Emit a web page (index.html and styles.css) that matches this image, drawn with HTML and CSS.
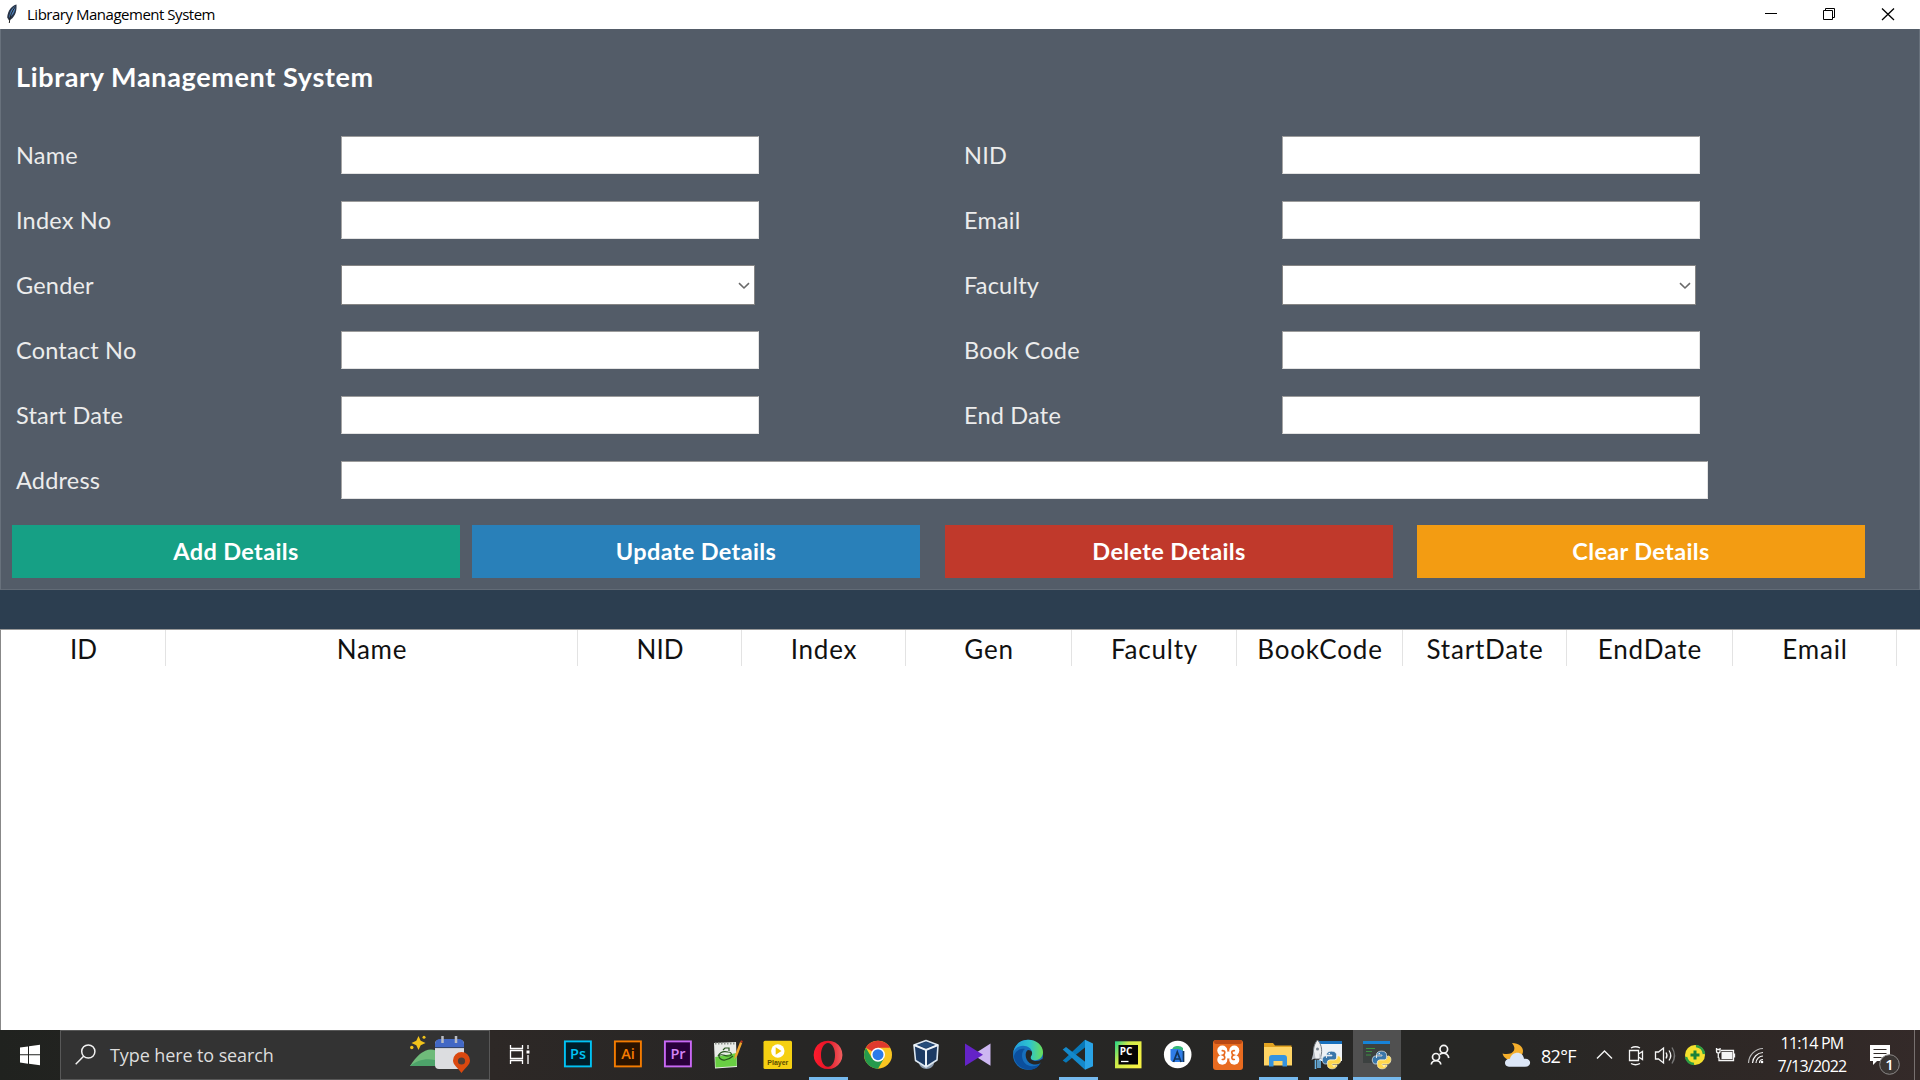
FILE: index.html
```html
<!DOCTYPE html>
<html lang="en">
<head>
<meta charset="utf-8">
<title>Library Management System</title>
<link rel="stylesheet" href="styles.css">
</head>
<body>
<header class="titlebar">
  <svg class="feather" width="12" height="20" viewBox="0 0 12 20"><path d="M10.5.5C6 1.500 1.500 6.500 1.200 13.500L3 16.500C8 14 11 9 10.500.5Z" fill="#263246"/><path d="M9.500 2C6 4 3.500 8 3.200 14 7 11 9.500 7 9.500 2Z" fill="#4f83bd"/><path d="M9.500 2.500C6 7 3.700 12 3.300 19" fill="none" stroke="#202020" stroke-width="1"/></svg>
  <span class="window-title">Library Management System</span>
  <svg class="window-controls" width="180" height="29" viewBox="0 0 180 29" fill="none" stroke="#000" stroke-width="1"><path d="M25 13.500h12M83.500 10.500h9v9h-9zM85.500 10.500v-2h9v9h-2"/><path d="M142 8.500l12 11.500M154 8.500l-12 11.500" stroke-width="1.300"/></svg>
</header>
<main>
  <section class="panel">
    <h1>Library Management System</h1>
    <form class="fields">
      <label>Name</label><input class="entry"><label>NID</label><input class="entry">
      <label>Index No</label><input class="entry"><label>Email</label><input class="entry">
      <label>Gender</label><div class="combo"><svg width="12" height="8" viewBox="0 0 12 8"><path d="M1 1.200 6 6 11 1.200" fill="none" stroke="#6a6a6a" stroke-width="1.600"/></svg></div>
      <label>Faculty</label><div class="combo"><svg width="12" height="8" viewBox="0 0 12 8"><path d="M1 1.200 6 6 11 1.200" fill="none" stroke="#6a6a6a" stroke-width="1.600"/></svg></div>
      <label>Contact No</label><input class="entry"><label>Book Code</label><input class="entry">
      <label>Start Date</label><input class="entry"><label>End Date</label><input class="entry">
      <label>Address</label><input class="entry wide">
    </form>
    <div class="actions">
      <button class="add">Add Details</button>
      <button class="update">Update Details</button>
      <button class="delete">Delete Details</button>
      <button class="clear">Clear Details</button>
    </div>
  </section>
  <div class="band"></div>
  <section class="table">
    <div class="thead">
      <span class="caps">ID</span><span>Name</span><span class="caps">NID</span><span>Index</span><span>Gen</span><span>Faculty</span><span>BookCode</span><span>StartDate</span><span>EndDate</span><span>Email</span>
    </div>
  </section>
</main>
<footer class="taskbar">
  <div class="start"><svg width="60" height="50" viewBox="0 0 60 50" fill="#fff"><path d="M20 17.600 28 16.400V24.300H20zM29 16.300 40 14.700V24.300H29zM20 25.300H28V33.700L20 32.500zM29 25.300H40V35.300L29 33.800z"/></svg></div>
  <div class="search">
    <svg width="21" height="21" viewBox="0 0 21 21" fill="none" stroke="#f2f2f2" stroke-width="1.500"><circle cx="13.300" cy="7.500" r="6.600"/><path d="M8.600 12.200.7 20.200"/></svg>
    <span>Type here to search</span>
    <svg class="scene" width="62" height="40" viewBox="0 0 62 40">
      <path d="M0 31C9 17 20 9 31 19V31Z" fill="#6fbb7a"/><path d="M0 31C8 24 20 22 31 27V31Z" fill="#4da36a"/>
      <path d="M8.500 1 10.700 5.800 15.500 8 10.700 10.200 8.500 15 6.300 10.200 1.500 8 6.300 5.800Z" fill="#f2c31b"/><circle cx="14" cy="2.200" r="1.500" fill="#f2c31b"/><circle cx="1.800" cy="12.500" r="1.700" fill="#f2c31b"/>
      <rect x="25" y="5" width="29" height="29" rx="4" fill="#dcdde0"/><path d="M25 12V9a5 5 0 0 1 5-5h19a5 5 0 0 1 5 5v3Z" fill="#4268c5"/><path d="M25 12.600h29" stroke="#24375f"/><path d="M32.500 1v7M46 1v7" stroke="#b9bcc4" stroke-width="2.500"/>
      <path d="M51.500 38C48 33 43 30 43 25.500a8.500 8.500 0 0 1 17 0C60 30 55 33 51.500 38Z" fill="#d9480f"/><circle cx="51.500" cy="26" r="3.600" fill="#4a3d38"/>
    </svg>
  </div>
  <div class="cell taskview"><svg width="22" height="22" viewBox="0 0 22 22" fill="none" stroke="#fff" stroke-width="1.300"><path d="M1.500 1v3.500h12V1M1.500 6.500h12v8h-12zM1.500 20v-3.500h12V20M19 1v4M19 11v9"/><path d="M17.500 6.500h3v3h-3z" fill="#fff" stroke="none"/></svg></div>
  <nav class="apps">
    <div class="cell"><svg viewBox="0 0 50 50"><rect x="11.900" y="11.400" width="26" height="25" fill="#001d29" stroke="#00c3f5" stroke-width="1.900"/><text class="adobe" x="25" y="29" fill="#00c3f5">Ps</text></svg></div>
    <div class="cell"><svg viewBox="0 0 50 50"><rect x="11.900" y="11.400" width="26" height="25" fill="#2a1300" stroke="#f57c00" stroke-width="1.900"/><text class="adobe" x="25" y="29" fill="#f57c00">Ai</text></svg></div>
    <div class="cell"><svg viewBox="0 0 50 50"><rect x="11.900" y="11.400" width="26" height="25" fill="#29003a" stroke="#c968f5" stroke-width="1.900"/><text class="adobe" x="25" y="29" fill="#d484f5">Pr</text></svg></div>
    <div class="cell"><svg viewBox="0 0 50 50"><path d="M11 13 33 12 34 37 12 38.500Z" fill="#e9ece8"/><path d="M12.200 27 33.500 23 33.700 36 12.500 37.500Z" fill="#69cf43"/><path d="M12 13.500h21" stroke="#8d928c" stroke-width="2" stroke-dasharray="1.500 1.500"/><path d="M15 26c2-4 6-5 10-4 4 0 5 4 0 4-3 0-5-2-8-1s1 6 5 5 6-2 8-4M20 20l2-2h4v3" fill="none" stroke="#28551f" stroke-width="1.200"/><path d="m37 12-5 13-.8 4.500 3-3.500 5-13Z" fill="#eda52b"/><path d="m37 12 2.200 1 .6-2-1.700-.8Z" fill="#b93520"/></svg></div>
    <div class="cell"><svg viewBox="0 0 50 50"><rect x="10.500" y="10.800" width="28.500" height="28.200" rx="1.500" fill="#f5d012"/><circle cx="24.800" cy="21" r="6.700" fill="#fff"/><path d="m22.700 17.300 5.800 3.700-5.800 3.700Z" fill="#f1c500"/><text class="player" x="24.800" y="35.200">Player</text></svg></div>
    <div class="cell running"><svg viewBox="0 0 50 50"><defs><linearGradient id="opera" x2="1"><stop stop-color="#ff1b2d"/><stop offset=".5" stop-color="#e51527"/><stop offset="1" stop-color="#f06060"/></linearGradient></defs><path d="M25 10.700a14.400 14.200 0 1 0 .1 0ZM25 13c4 0 7 5.200 7 11.900S29 36.700 25 36.700 18 31.600 18 24.900 21 13 25 13Z" fill="url(#opera)" fill-rule="evenodd"/></svg></div>
    <div class="cell"><svg viewBox="0 0 50 50"><circle cx="25" cy="24.700" r="14" fill="#f9c521"/><path d="M25 24.700 12.900 17.700A14 14 0 0 1 37.100 17.700H25Z" fill="#df3a2d"/><path d="M12.900 17.700A14 14 0 0 0 25 38.700L31 28.200 25 24.700 19 28.200Z" fill="#269a4c"/><circle cx="25" cy="24.700" r="7" fill="#fff"/><circle cx="25" cy="24.700" r="5.500" fill="#2c7be9"/></svg></div>
    <div class="cell"><svg viewBox="0 0 50 50"><path d="M16 33c0 3 4 6 7.500 6s7.500-3 7.500-6" fill="#8d9caf"/><path d="m23 10.500 12 4.500-1 15-11 7-10.500-6.500L11 15Z" fill="#1c3a63" stroke="#dce7f1" stroke-width="1.600" stroke-linejoin="round"/><path d="m11 15 12 5 12-5M23 20v16" fill="none" stroke="#eef4f9" stroke-width="2"/><path d="m15 15 8-3 8 3-8 3Z" fill="#254d7b"/></svg></div>
    <div class="cell"><svg viewBox="0 0 50 50"><path d="M37.500 13.500v22.300L20 24.700Z" fill="#cdb7f1"/><path d="M12 13.500 30 24.700 12 36Z" fill="#6423c7"/></svg></div>
    <div class="cell"><svg viewBox="0 0 50 50"><defs><linearGradient id="edge" x2="1"><stop stop-color="#2299dc"/><stop offset=".55" stop-color="#2dc4cf"/><stop offset="1" stop-color="#6bdf56"/></linearGradient></defs><circle cx="25" cy="24.800" r="15" fill="#176fbd"/><path d="M10 24C11 15 17 9.800 25 9.800c9 0 15 6 15 12.500 0 5-4 8-8 8-3 0-5-1-5-2.500s2-2 2-5c0-4-4-7-9-7-5 0-9 3.500-10 8.200Z" fill="url(#edge)"/><path d="M22 19c-5 3-4 15 5 17 5 1 8-1 10-2-4 6-10 6.500-15 5-7-2-11-8-11-13 2-6 7-8 11-7Z" fill="#0b4f9d"/><path d="M25 20c4 0 5 3 3.500 5.500-2 3 0 5.500 5 5.500 2 0 4-1 5.500-2l1.500 1c-3 4-7 5.500-11.500 4-7-2-8-12-4-14Z" fill="#272625"/></svg></div>
    <div class="cell running"><svg viewBox="0 0 50 50"><path d="M32 9.800 12 28.500 9.700 30.500 13 32.800 35 15Z" fill="#0878b9"/><path d="M13 17 9.700 19.500 32 39.800 35 34Z" fill="#1489cb"/><path d="m32 9.800 8 3.700v22.700l-8 3.600Z" fill="#2aa3e6"/></svg></div>
    <div class="cell"><svg viewBox="0 0 50 50"><defs><linearGradient id="pc" x2="1" y2=".6"><stop stop-color="#20d58a"/><stop offset=".4" stop-color="#cdeb49"/><stop offset="1" stop-color="#f6f144"/></linearGradient></defs><rect x="12" y="11.300" width="26.500" height="27" fill="url(#pc)"/><rect x="15.500" y="15" width="19.500" height="19.500" fill="#050505"/><text class="pc" x="16.800" y="24.500">PC</text><path d="M18 31.500h7.500" stroke="#fff" stroke-width="1.300"/></svg></div>
    <div class="cell"><svg viewBox="0 0 50 50"><circle cx="24.700" cy="24.500" r="13.800" fill="#fff"/><path d="M19 20a6 4.500 0 0 1 11-2v3Z" fill="#36b979"/><path d="M17.500 19h8l5 2v11h-11l-2-2Z" fill="#2f7de8"/><path d="m20.500 32 3.800-10 3.800 10M21.800 29h5M30.500 21v11" fill="none" stroke="#12355c" stroke-width="1.700"/></svg></div>
    <div class="cell"><svg viewBox="0 0 50 50"><rect x="10" y="10" width="30" height="30" rx="3" fill="#e86b20"/><rect x="11" y="10" width="28" height="4" rx="2" fill="#b94814"/><g fill="#fff"><circle cx="19.300" cy="20.600" r="5"/><circle cx="31.300" cy="20.600" r="5"/><circle cx="19.300" cy="29.800" r="5"/><circle cx="31.300" cy="29.800" r="5"/><path d="M20 21.500h10.600v7H20Z"/></g><path d="m19.300 20.700 1.400.2c1.500 0 1.500 3.500-.6 4.200 2.100.7 2.100 4 .6 4.200l-1.400.2M31.300 20.700l-1.400.2c-1.500 0-1.500 3.500.6 4.200-2.100.7-2.100 4-.6 4.200l1.400.2" fill="none" stroke="#e86b20" stroke-width="1.700" stroke-linecap="round"/></svg></div>
    <div class="cell running"><svg viewBox="0 0 50 50"><path d="M11 13h9l2 2.500h16.500v4H11Z" fill="#e2a321"/><path d="M11 17h28v18.500H11Z" fill="#ffd465"/><path d="M16 36.500V28q0-3 3-3h12q3 0 3 3v8.500h-4.500v-5.500h-9v5.500Z" fill="#3593df"/></svg></div>
    <div class="cell running"><svg viewBox="0 0 50 50"><path d="M16 11h23v20H16Z" fill="#eef2f6"/><path d="M16 11h23v3H16Z" fill="#1770bd"/><path d="M14.500 10c5 5 5 13 2.500 19h-5C9.500 23 10 15 14.500 10Z" fill="#eceef0" stroke="#747b82"/><path d="m11 21-2.500 9 4-2m4-5 3 7-3-2" fill="#b8bdc4"/><circle cx="14.500" cy="19" r="1.500" fill="#7b8792"/><path d="M12.500 30v9M15 30v8M17 30v8" stroke="#6bb5e5" stroke-width="1.600"/><use href="#snake" x="19" y="20"/></svg></div>
    <div class="cell active"><svg viewBox="1 0 48 50"><defs><g id="snake"><path d="M4.500 8V4.500C4.500 0 14.500 0 14.500 4.500V8Q14.500 10 12.500 10H8Q5 10 5 14H3.500C-.8 14-.8 6 3.500 6H10V5H4.500Z" fill="#3976aa" stroke="#e8eef2" stroke-width=".7"/><path d="M15.500 6C20 5 20 14 15.500 14H10v1h5c0 5-9.500 5-9.500.5V12q0-2 2.500-2h4.500q3 0 3-4Z" fill="#ffd74c" stroke="#fff4c5" stroke-width=".7"/><circle cx="7.300" cy="3.500" r=".8" fill="#fff"/><circle cx="12" cy="16" r=".8" fill="#fff"/></g></defs><path d="M11 11h27v22H11Z" fill="#3c4140"/><path d="M11 11h27v3H11Z" fill="#1683d8"/><path d="M14 18.500h9M14 21.500h6M14 25h5" stroke="#3d9142"/><use href="#snake" x="20" y="20"/></svg></div>
  </nav>
  <div class="tray">
    <svg width="480" height="50" viewBox="0 0 480 50" fill="none" stroke="#f5f5f5" stroke-width="1.400">
      <g stroke-width="1.700"><circle cx="43.800" cy="19.200" r="3.800"/><path d="M39.500 24.500q4-2.500 7.500 0 1.500 1.500 1.800 3.500"/><circle cx="36" cy="27" r="3.500"/><path d="M31.300 34.500c.5-5 9-5 9.500 0"/></g>
      <path d="M113 13c6 7 0 13-9.500 10.500C106 34 124 31 124 21c0-4-4-8-11-8Z" fill="#f5af2c" stroke="none" transform="translate(-1 0)"/><path d="M109 36.800c-6-1-5-8 1-8 2-8 13-8 14 0 8-1 8 8 1 8Z" fill="#dce7f7" stroke="none"/>
      <path d="m197 28.500 7.500-7.500 7.500 7.500"/>
      <path d="M229.500 20.500h9v10h-9zM238.500 24l4-2.500v8l-4-2.500M231 18q4.500-2.500 9 0M231 33.500q4.500 2.500 9 0" stroke-width="1.300"/>
      <path d="M255.500 22h3l5-4v15l-5-4h-3z" stroke-width="1.300"/><path d="M266 22.500q2 3 0 6M269 20.500q3.500 5 0 10" stroke-width="1.300"/><path d="M272 17.500q5 8 0 16" stroke="#777"/>
      <circle cx="295" cy="25" r="10" fill="#f4e02d" stroke="none"/><path d="M296 16a9 9 0 0 1 8 8M286 27a9 9 0 0 0 8 7" stroke="#2d9d45" stroke-width="2.500"/><path d="M295 20.500v9M290.500 25h9" stroke="#19813a" stroke-width="3"/>
      <path d="M316 19.500h4M316.500 18v3q0 2 1.800 2t1.800-2v-3M318.300 23v5M321 20.500h12.500v10H319v-3M334.500 23.500v4" stroke-width="1.300"/><path d="M321.500 22h11v7h-11z" fill="#f5f5f5" stroke="none"/>
      <g stroke-width="1.200"><path d="M348.500 33a15 15 0 0 1 14.500-14.500" stroke="#bbb"/><path d="M352.500 33a11 11 0 0 1 10.500-10.500M356 33a7 7 0 0 1 7-7M359.500 33a3.500 3.500 0 0 1 3.500-3.500"/></g><circle cx="362" cy="32" r="1.300" fill="#fff" stroke="none"/>
    </svg>
    <span class="temp">82°F</span>
    <div class="clock"><span>11:14 PM</span><span>7/13/2022</span></div>
    <svg class="notice" width="34" height="50" viewBox="0 0 34 50"><path d="M2 15h20v16H9l-4 4v-4H2Z" fill="#fff"/><path d="M5.500 19.500h13M5.500 23.500h13M5.500 27.500h8" stroke="#302927" stroke-width="1.200"/><circle cx="21.500" cy="34.500" r="9.800" fill="#3a3533" stroke="#8a8887"/><text x="21.500" y="39.800">1</text></svg>
    <i class="desktop"></i>
  </div>
</footer>
</body>
</html>
```
FILE: styles.css
```css
* { box-sizing: border-box; }
body { margin: 0; width: 1920px; height: 1080px; overflow: hidden; display: flex; flex-direction: column; background: #fff; font-family: Lato, sans-serif; }
svg { display: block; flex: none; }
.titlebar { height: 29px; display: flex; align-items: center; background: #fff; padding-left: 6px; }
.feather { margin-top: -2px; }
.window-title { margin-left: 9px; font: 15px/29px "Open Sans", sans-serif; letter-spacing: -.48px; color: #000; white-space: nowrap; }
.window-controls { margin-left: auto; }
main { flex: 1; display: flex; flex-direction: column; }
.panel { height: 561px; background: #535c68; border-left: 1px solid #68717c; border-right: 1px solid #68717c; border-bottom: 1px solid #626b76; }
h1 { height: 93px; margin: 0; padding: 0 0 0 15px; font-size: 27px; line-height: 96px; font-weight: 700; letter-spacing: .64px; color: #fff; white-space: nowrap; }
.fields { display: grid; grid-template-columns: 325px 623px 318px 420px; grid-auto-rows: 65px; align-items: center; padding-left: 15px; }
.fields label { font-size: 23.500px; line-height: 30px; letter-spacing: .2px; color: #ececec; white-space: nowrap; }
.entry { width: 418px; height: 38px; margin: 1px 0 0; padding: 0 4px; border: 1px solid #e3e3e3; border-top-color: #9b9b9b; border-left-color: #a5a5a5; border-radius: 0; background: #fff; outline: 0; }
.wide { grid-column: 2 / 5; width: 1367px; }
.combo { width: 414px; height: 40px; margin: 1px 0 0; border: 1px solid #858585; background: #fff; display: flex; align-items: center; justify-content: flex-end; padding: 2px 4px 0 0; }
.actions { display: flex; margin-top: 13px; padding-left: 11px; }
.actions button { width: 448px; height: 53px; border: 0; padding: 0; color: #fff; font: 700 23.500px/53px Lato, sans-serif; letter-spacing: .35px; }
.add { background: #16a085; }
.update { background: #2980b9; margin-left: 12px; }
.delete { background: #c0392b; margin-left: 25px; }
.clear { background: #f39c12; margin-left: 24px; }
.band { height: 39px; background: #2c3e50; }
.table { flex: 1; border-top: 1px solid #999; border-left: 1px solid #888; background: #fff; }
.thead { display: grid; grid-template-columns: 165px 412px 164px 164px 166px 165px 166px 164px 166px 164px; height: 36px; font-size: 26px; line-height: 39px; letter-spacing: .8px; text-align: center; color: #111; }
.thead span { height: 36px; border-right: 1px solid #e3e3e3; padding-left: 1px; }
.thead .caps { letter-spacing: 0; }
.taskbar { height: 50px; display: flex; background: linear-gradient(90deg, #20221f 0, #2d2826 490px, #272625 760px, #272725 1500px, #302826 1800px, #342a29 1920px); color: #fff; }
.start { width: 60px; }
.search { width: 430px; background: #333; border: 1px solid #585858; display: flex; align-items: center; padding-left: 14px; font: 18px/48px "Open Sans", sans-serif; }
.search span { margin-left: 14px; letter-spacing: -.1px; color: #ddd; white-space: nowrap; width: 300px; }
.search svg { margin-bottom: 2px; }
.search .scene { margin: 0; }
.cell { width: 50px; height: 50px; flex: none; }
.cell svg { width: 100%; height: 50px; }
.taskview { width: 63px; }
.taskview svg { width: 22px; height: 22px; margin: 14px 0 0 19px; }
.apps { display: flex; width: 848px; }
.running { background: linear-gradient(#76b9ed, #76b9ed) 6px 47px / 39px 3px no-repeat; }
.active { width: 48px; background: #505050; border-bottom: 3px solid #76b9ed; }
.adobe { font: 600 14.500px "Open Sans", sans-serif; text-anchor: middle; }
.player { font: 700 7px "Liberation Sans", sans-serif; text-anchor: middle; fill: #5b4c00; }
.pc { font: 700 10px "Open Sans", sans-serif; fill: #fff; }
.tray { width: 519px; height: 50px; display: grid; grid-template-columns: 140px 234px 74px 28px 37px 6px; position: relative; }
.tray > svg:first-child { position: absolute; left: -1px; top: 0; }
.temp { grid-column: 2; font: 18px/52px "Open Sans", sans-serif; letter-spacing: -.7px; }
.clock { display: flex; flex-direction: column; align-items: center; font: 16px/23px "Open Sans", sans-serif; padding-top: 2px; white-space: nowrap; }
.clock span { letter-spacing: -.75px; }
.notice { grid-column: 5; margin-left: -9px; }
.notice text { font: 600 15px "Open Sans", sans-serif; fill: #fff; text-anchor: middle; }
.desktop { height: 50px; border-left: 1px solid #77706f; }
```
